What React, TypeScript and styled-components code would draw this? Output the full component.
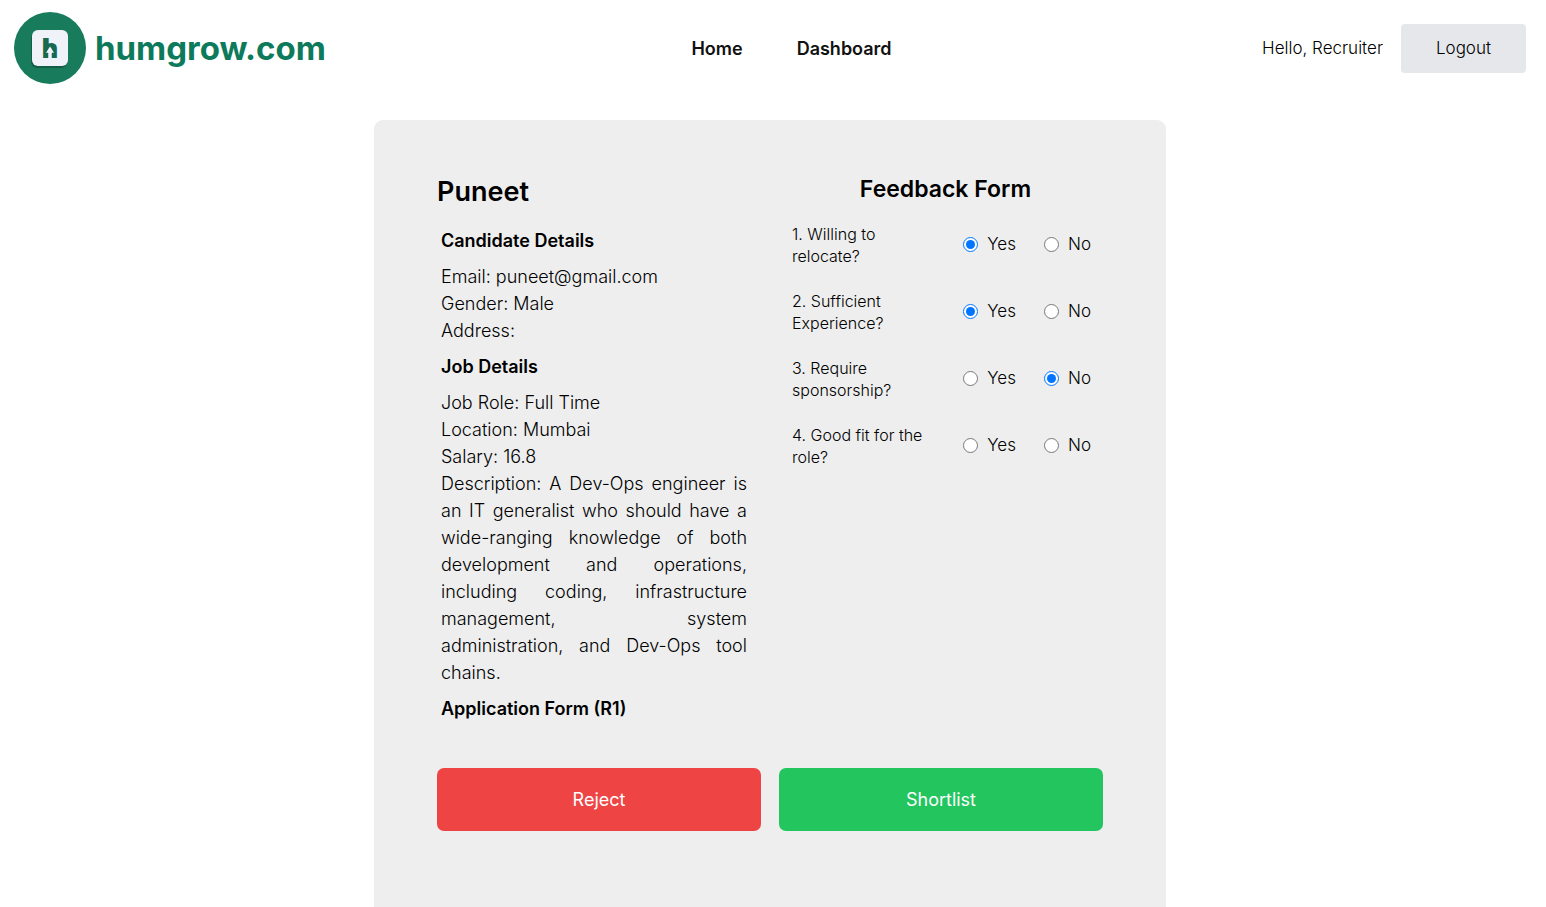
import React, { useState } from "react";
import styled, { createGlobalStyle } from "styled-components";

const GlobalStyle = createGlobalStyle`
  *, *::before, *::after { box-sizing: border-box; }
  body {
    margin: 0;
    background: #fff;
    color: #000;
    font-family: Inter, "Liberation Sans", sans-serif;
    font-size: 17px;
    font-weight: 300;
    line-height: 27px;
  }
  h1, h2, h3, p { margin: 0; }
  button { font: inherit; border: 0; cursor: pointer; }
`;

const Page = styled.div`
  display: flex;
  flex-direction: column;
  min-height: 100vh;
  padding-right: 6px;
`;

const Header = styled.header`
  display: grid;
  grid-template-columns: 1fr auto 1fr;
  align-items: center;
  height: 96px;
  padding: 0 14px;
`;

const Brand = styled.a`
  display: flex;
  align-items: center;
  gap: 9px;
  color: #0c7a5b;
  font-size: 33px;
  font-weight: 700;
  line-height: 40px;
  text-decoration: none;
`;

const Nav = styled.nav`
  display: flex;
  gap: 54px;
  padding-left: 43px;
`;

const NavLink = styled.a`
  color: #111;
  font-size: 18px;
  font-weight: 600;
  text-decoration: none;
`;

const Account = styled.div`
  display: flex;
  align-items: center;
  justify-content: flex-end;
  gap: 18px;
`;

const LogoutButton = styled.button`
  width: 125px;
  height: 49px;
  border-radius: 4px;
  background: #e5e7eb;
  color: #000;
`;

const Card = styled.main`
  flex: 1;
  width: 100%;
  max-width: 792px;
  margin: 24px auto 0;
  padding: 54px 63px 76px;
  border-radius: 9px 9px 0 0;
  background: #eee;
`;

const Columns = styled.div`
  display: grid;
  grid-template-columns: 1fr 1fr;
  gap: 36px;
`;

const Name = styled.h1`
  font-size: 27px;
  font-weight: 600;
  line-height: 36px;
  margin-bottom: 17px;
`;

const Details = styled.div`
  display: flex;
  flex-direction: column;
  gap: 9px;
  padding: 0 5px 0 4px;
`;

const DetailTitle = styled.h2`
  font-size: 18px;
  font-weight: 600;
  line-height: 27px;
`;

const DetailText = styled.p`
  font-size: 18px;
  text-align: justify;
`;

const FormTitle = styled.h2`
  font-size: 23px;
  font-weight: 600;
  line-height: 30px;
  margin-bottom: 19px;
  text-align: center;
`;

const Questions = styled.form`
  display: flex;
  flex-direction: column;
  gap: 22px;
  padding: 0 12px 0 4px;
`;

const QuestionRow = styled.div`
  display: flex;
  justify-content: space-between;
`;

const QuestionText = styled.p`
  width: 140px;
  font-size: 16px;
  line-height: 22px;
`;

const Options = styled.div`
  display: flex;
  gap: 28px;
  padding: 8px 0 10px;
`;

const Option = styled.label`
  display: flex;
  align-items: center;
  gap: 9px;
`;

const Radio = styled.input`
  width: 15px;
  height: 15px;
  margin: 0;
`;

const Actions = styled.div`
  display: grid;
  grid-template-columns: 1fr 1fr;
  gap: 18px;
  margin-top: 46px;
`;

const ActionButton = styled.button<{ $color: string }>`
  height: 63px;
  border-radius: 7px;
  background: ${(p) => p.$color};
  color: #fff;
  font-size: 18px;
  font-weight: 400;
`;

const Logo = () => (
  <svg width="72" height="72" viewBox="0 0 72 72" aria-hidden="true">
    <circle cx="36" cy="36" r="36" fill="#177b5c" />
    <rect x="17" y="20" width="36" height="36" rx="6" fill="#0d4a37" opacity="0.6" />
    <rect x="18" y="18" width="36" height="36" rx="6" fill="#eff3f9" />
    <text
      x="28.4"
      y="45"
      fontFamily="'Liberation Sans', sans-serif"
      fontSize="24"
      fontWeight="700"
      fill="#17694f"
      stroke="#17694f"
      strokeWidth="2.2"
    >
      h
    </text>
    <path d="M36 34.5l4 6.2h-2.4V46.5h-3.2V40.7H32z" fill="#eff3f9" />
  </svg>
);

const questions = [
  { text: "1. Willing to relocate?", answer: "Yes" },
  { text: "2. Sufficient Experience?", answer: "Yes" },
  { text: "3. Require sponsorship?", answer: "No" },
  { text: "4. Good fit for the role?", answer: "" },
];

export default function App() {
  const [answers, setAnswers] = useState(questions.map((q) => q.answer));
  const choose = (index: number, value: string) =>
    setAnswers((all) => all.map((a, i) => (i === index ? value : a)));

  return (
    <>
      <GlobalStyle />
      <Page>
        <Header>
          <Brand href="#">
            <Logo />
            humgrow.com
          </Brand>
          <Nav>
            <NavLink href="#home">Home</NavLink>
            <NavLink href="#dashboard">Dashboard</NavLink>
          </Nav>
          <Account>
            <span>Hello, Recruiter</span>
            <LogoutButton type="button">Logout</LogoutButton>
          </Account>
        </Header>
        <Card>
          <Columns>
            <section>
              <Name>Puneet</Name>
              <Details>
                <DetailTitle>Candidate Details</DetailTitle>
                <div>
                  <DetailText>Email: puneet@gmail.com</DetailText>
                  <DetailText>Gender: Male</DetailText>
                  <DetailText>Address:</DetailText>
                </div>
                <DetailTitle>Job Details</DetailTitle>
                <div>
                  <DetailText>Job Role: Full Time</DetailText>
                  <DetailText>Location: Mumbai</DetailText>
                  <DetailText>Salary: 16.8</DetailText>
                  <DetailText>
                    Description: A Dev-Ops engineer is an IT generalist who should have a
                    wide-ranging knowledge of both development and operations, including
                    coding, infrastructure management, system administration,&nbsp;and Dev-Ops
                    tool chains.
                  </DetailText>
                </div>
                <DetailTitle>Application Form (R1)</DetailTitle>
              </Details>
            </section>
            <section>
              <FormTitle>Feedback Form</FormTitle>
              <Questions>
                {questions.map((q, i) => (
                  <QuestionRow key={q.text} role="radiogroup" aria-labelledby={`question-${i}`}>
                    <QuestionText id={`question-${i}`}>{q.text}</QuestionText>
                    <Options>
                      {["Yes", "No"].map((value) => (
                        <Option key={value}>
                          <Radio
                            type="radio"
                            name={`answer-${i}`}
                            value={value}
                            checked={answers[i] === value}
                            onChange={() => choose(i, value)}
                          />
                          {value}
                        </Option>
                      ))}
                    </Options>
                  </QuestionRow>
                ))}
              </Questions>
            </section>
          </Columns>
          <Actions>
            <ActionButton type="button" $color="#ef4444">Reject</ActionButton>
            <ActionButton type="button" $color="#22c55e">Shortlist</ActionButton>
          </Actions>
        </Card>
      </Page>
    </>
  );
}
